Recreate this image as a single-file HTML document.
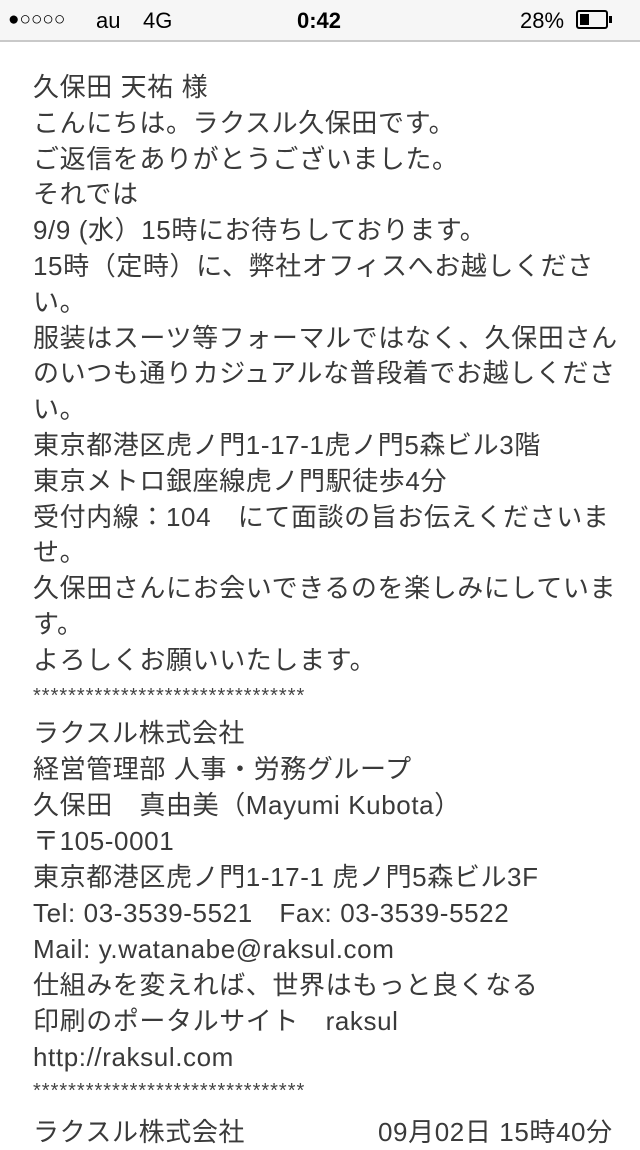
<!DOCTYPE html>
<html><head><meta charset="utf-8"><style>
body{margin:0;width:640px;height:1136px;overflow:hidden;background:#fff;font-family:"Liberation Sans","Noto Sans CJK JP",sans-serif;position:relative}
.sb{position:absolute;left:0;top:0;width:640px;height:40px;background:#f6f6f6;border-bottom:2px solid #c9c9c9;font-size:22px;color:#000}
.sb span{position:absolute;top:8px}
.l{position:absolute;left:33px;font-size:26px;line-height:36px;color:#3a3a3a;white-space:nowrap;letter-spacing:0.6px}
.st{position:absolute;left:33px;font-size:20px;line-height:20px;color:#444;letter-spacing:1px;white-space:nowrap}
</style></head><body>
<div class="sb">
<span style="left:8px;font-size:19px;top:9px">●○○○○</span>
<span style="left:96px">au</span><span style="left:143px">4G</span>
<span style="left:297px;font-weight:bold">0:42</span>
<span style="left:520px">28%</span>
<div style="position:absolute;left:576px;top:10px;width:32px;height:19px;border:2px solid #000;border-radius:3px;box-sizing:border-box;padding:2px"><div style="width:9px;height:11px;background:#000"></div></div>
<div style="position:absolute;left:609px;top:16px;width:3px;height:7px;background:#000"></div>
</div>
<div class="l" style="top:69px">久保田 天祐 様</div>
<div class="l" style="top:105px">こんにちは。ラクスル久保田です。</div>
<div class="l" style="top:141px">ご返信をありがとうございました。</div>
<div class="l" style="top:176px">それでは</div>
<div class="l" style="top:212px">9/9 (水）15時にお待ちしております。</div>
<div class="l" style="top:248px">15時（定時）に、弊社オフィスへお越しくださ</div>
<div class="l" style="top:284px">い。</div>
<div class="l" style="top:320px">服装はスーツ等フォーマルではなく、久保田さん</div>
<div class="l" style="top:355px">のいつも通りカジュアルな普段着でお越しくださ</div>
<div class="l" style="top:391px">い。</div>
<div class="l" style="top:427px">東京都港区虎ノ門1-17-1虎ノ門5森ビル3階</div>
<div class="l" style="top:463px">東京メトロ銀座線虎ノ門駅徒歩4分</div>
<div class="l" style="top:499px">受付内線：104　にて面談の旨お伝えくださいま</div>
<div class="l" style="top:534px">せ。</div>
<div class="l" style="top:570px">久保田さんにお会いできるのを楽しみにしていま</div>
<div class="l" style="top:606px">す。</div>
<div class="l" style="top:642px">よろしくお願いいたします。</div>
<div class="st" style="top:686px">*******************************</div>
<div class="l" style="top:715px">ラクスル株式会社</div>
<div class="l" style="top:751px">経営管理部 人事・労務グループ</div>
<div class="l" style="top:787px">久保田　真由美（Mayumi Kubota）</div>
<div class="l" style="top:823px">〒105-0001</div>
<div class="l" style="top:859px">東京都港区虎ノ門1-17-1 虎ノ門5森ビル3F</div>
<div class="l" style="top:895px">Tel: 03-3539-5521　Fax: 03-3539-5522</div>
<div class="l" style="top:931px">Mail: y.watanabe@raksul.com</div>
<div class="l" style="top:967px">仕組みを変えれば、世界はもっと良くなる</div>
<div class="l" style="top:1003px">印刷のポータルサイト　raksul</div>
<div class="l" style="top:1039px">http://raksul.com</div>
<div class="st" style="top:1081px">*******************************</div>
<div class="l" style="top:1114px">ラクスル株式会社</div>
<div class="l" style="top:1114px;left:378px">09月02日 15時40分</div>
</body></html>
